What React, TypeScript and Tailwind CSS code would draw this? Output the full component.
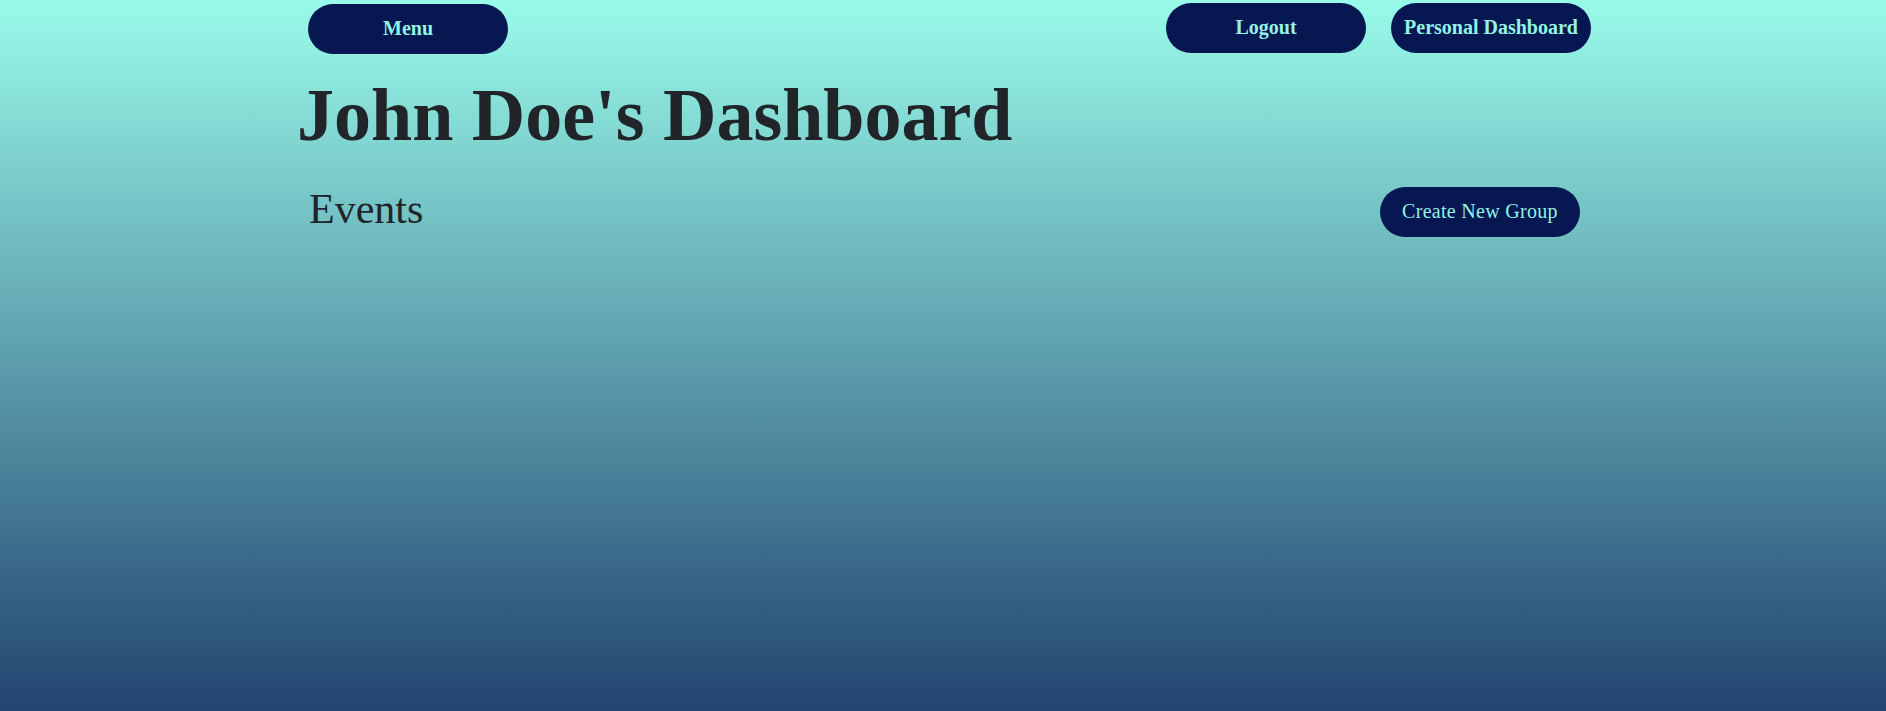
import React from 'react'

const serif = { fontFamily: '"Liberation Serif", "DejaVu Serif", serif' }

function PillButton({ children, bold = true }: { children: React.ReactNode; bold?: boolean }) {
  return (
    <button
      type="button"
      className={`h-[50px] w-[200px] rounded-full bg-[#061752] pb-[2px] text-[20px] leading-none text-[#93f3e3] ${bold ? 'font-bold' : 'font-normal tracking-[0.3px]'}`}
    >
      {children}
    </button>
  )
}

export default function App() {
  return (
    <div
      style={serif}
      className="min-h-[711px] w-full bg-gradient-to-b from-[#99fbe9] via-[#5e9fad] to-[#234570]"
    >
      {/* barra superior */}
      <div className="flex items-start justify-between pl-[308px] pr-[295px] pt-[3px]">
        <div className="pt-px">
          <PillButton>Menu</PillButton>
        </div>
        <div className="flex gap-[25px]">
          <PillButton>Logout</PillButton>
          <PillButton>Personal Dashboard</PillButton>
        </div>
      </div>

      <h1 className="mt-[16px] pl-[297px] text-[74px] font-bold leading-[90px] text-[#212529]">
        John Doe&apos;s Dashboard
      </h1>

      <div className="mt-[24px] flex items-start justify-between pl-[309px] pr-[306px]">
        <h2 className="text-[42px] leading-[50px] font-normal text-[#212529]">Events</h2>
        <div className="mt-[3px]">
          <PillButton bold={false}>Create New Group</PillButton>
        </div>
      </div>
    </div>
  )
}
